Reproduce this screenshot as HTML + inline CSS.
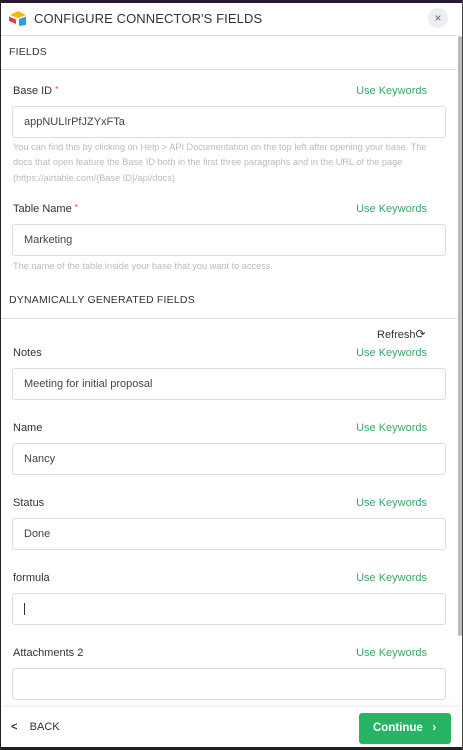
<!DOCTYPE html>
<html><head><style>
*{box-sizing:border-box;margin:0;padding:0}
body{width:463px;height:750px;overflow:hidden;background:#fff;font-family:"Liberation Sans",sans-serif;position:relative;color:#333}
.a{position:absolute}
.lbl{position:absolute;left:13px;font-size:11px;color:#333}
.kw{position:absolute;right:36px;font-size:11px;color:#3aa66a}
.in{position:absolute;left:12px;width:434px;height:32px;border:1px solid #ddd;border-radius:3px;font-size:11px;color:#444;padding:9px 11px}
.help{position:absolute;left:13px;width:436px;font-size:9.2px;line-height:15.3px;color:#bbb}
.line{position:absolute;left:1px;width:456px;height:1px;background:#ddd}
.sec{position:absolute;left:9px;font-size:10.5px;color:#333;letter-spacing:.2px}
</style></head><body>
<div class="a" style="left:0;top:0;width:463px;height:3px;background:#2a1a2e"></div>
<div class="a" style="left:0;top:0;width:1px;height:750px;background:#222"></div>
<div class="a" style="left:0;top:747px;width:463px;height:3px;background:#222"></div>
<div class="a" style="left:462px;top:0;width:1px;height:750px;background:#444"></div>
<svg class="a" style="left:8px;top:10px" width="20" height="17" viewBox="0 0 20 17"><path d="M2 5 L10 1 L18 5 L10 8Z" fill="#f8b400"/><path d="M11 9 L18 6.5 L18 15 L11 16Z" fill="#2d9fe6"/><path d="M1 6.5 L8 9.5 L8 14 L1 11Z" fill="#e8384a"/></svg>
<div class="a" style="left:34px;top:11px;font-size:13px;color:#333;letter-spacing:.1px">CONFIGURE CONNECTOR'S FIELDS</div>
<div class="a" style="left:428px;top:8px;width:20px;height:20px;border-radius:50%;background:#eceef2;color:#666;font-size:12px;text-align:center;line-height:20px">×</div>
<div class="line" style="top:35px"></div>
<div class="a" style="left:458px;top:36px;width:4px;height:600px;background:#bbb;border-radius:2px"></div>
<div class="sec" style="top:46px">FIELDS</div>
<div class="line" style="top:69px"></div>
<div class="lbl" style="top:85px">Base ID <span style="color:#e33;font-size:8px;vertical-align:top">*</span></div>
<div class="kw" style="top:85px">Use Keywords</div>
<div class="in" style="top:106px">appNULIrPfJZYxFTa</div>
<div class="help" style="top:140px;width:430px">You can find this by clicking on Help &gt; API Documentation on the top left after opening your base. The docs that open feature the Base ID both in the first three paragraphs and in the URL of the page (https://airtable.com/{Base ID}/api/docs)</div>
<div class="lbl" style="top:203px">Table Name <span style="color:#e33;font-size:8px;vertical-align:top">*</span></div>
<div class="kw" style="top:203px">Use Keywords</div>
<div class="in" style="top:224px">Marketing</div>
<div class="help" style="top:259px">The name of the table inside your base that you want to access.</div>
<div class="sec" style="top:294px">DYNAMICALLY GENERATED FIELDS</div>
<div class="line" style="top:318px"></div>
<div class="a" style="left:377px;top:327px;font-size:11px;color:#333">Refresh<span style="font-size:12px">⟳</span></div>
<div class="lbl" style="top:347px">Notes</div><div class="kw" style="top:347px">Use Keywords</div>
<div class="in" style="top:368px">Meeting for initial proposal</div>
<div class="lbl" style="top:422px">Name</div><div class="kw" style="top:422px">Use Keywords</div>
<div class="in" style="top:443px">Nancy</div>
<div class="lbl" style="top:497px">Status</div><div class="kw" style="top:497px">Use Keywords</div>
<div class="in" style="top:518px">Done</div>
<div class="lbl" style="top:572px">formula</div><div class="kw" style="top:572px">Use Keywords</div>
<div class="in" style="top:593px"><span style="display:inline-block;width:1px;height:12px;background:#333"></span></div>
<div class="lbl" style="top:647px">Attachments 2</div><div class="kw" style="top:647px">Use Keywords</div>
<div class="in" style="top:668px"></div>
<div class="a" style="left:1px;top:707px;width:461px;height:40px;background:#fff;box-shadow:0 -2px 4px rgba(0,0,0,.06)"></div>
<div class="a" style="left:11px;top:721px;font-size:11px;color:#333"><b>&lt;</b>&nbsp;&nbsp;&nbsp; BACK</div>
<div class="a" style="left:359px;top:713px;width:92px;height:31px;background:#27b464;border-radius:3px;color:#fff;font-size:11.5px;font-weight:bold;line-height:31px;padding-left:14px">Continue&nbsp;&nbsp; ›</div>
</body></html>
